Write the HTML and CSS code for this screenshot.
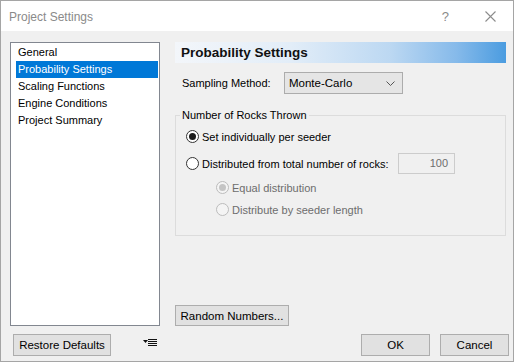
FILE: index.html
```html
<!DOCTYPE html>
<html>
<head>
<meta charset="utf-8">
<link rel="stylesheet" href="styles.css">
</head>
<body>
<div class="window">
  <div class="titlebar">
    <span class="title">Project Settings</span>
    <span class="help">?</span>
    <svg class="close" width="11" height="11" viewBox="0 0 11 11"><path d="M0.5 0.5 L10.5 10.5 M10.5 0.5 L0.5 10.5" stroke="#8c8c8c" stroke-width="1.1" fill="none"/></svg>
  </div>
  <div class="body">
    <div class="listbox">
      <div class="item">General</div>
      <div class="item selected">Probability Settings</div>
      <div class="item">Scaling Functions</div>
      <div class="item">Engine Conditions</div>
      <div class="item">Project Summary</div>
    </div>
    <div class="panel">
      <div class="header">Probability Settings</div>
      <div class="sampling">
        <span class="sampling-label">Sampling Method:</span>
        <div class="select">
          <span>Monte-Carlo</span>
          <svg width="9" height="5" viewBox="0 0 9 5"><polyline points="0.5,0.5 4.5,4.5 8.5,0.5" stroke="#555" stroke-width="1" fill="none"/></svg>
        </div>
      </div>
      <fieldset class="group">
        <legend>Number of Rocks Thrown</legend>
        <div class="row row1"><span class="radio checked"></span><span>Set individually per seeder</span></div>
        <div class="row row2"><span class="radio"></span><span class="wide">Distributed from total number of rocks:</span><span class="numbox">100</span></div>
        <div class="row sub row3"><span class="radio disabled checked"></span><span class="dim">Equal distribution</span></div>
        <div class="row sub row4"><span class="radio disabled"></span><span class="dim">Distribute by seeder length</span></div>
      </fieldset>
      <div class="btn random">Random Numbers...</div>
    </div>
    <div class="footer-left">
      <div class="btn restore">Restore Defaults</div>
      <svg class="menu-icon" width="14" height="8" viewBox="0 0 14 8">
        <polygon points="0,1 5,1 2.5,4" fill="#111"/>
        <rect x="5" y="0" width="9" height="1" fill="#111"/>
        <rect x="5" y="2" width="9" height="1" fill="#111"/>
        <rect x="5" y="4" width="9" height="1" fill="#111"/>
        <rect x="5" y="6" width="9" height="1" fill="#111"/>
      </svg>
    </div>
    <div class="footer-right">
      <div class="btn ok">OK</div>
      <div class="btn cancel">Cancel</div>
    </div>
  </div>
</div>
</body>
</html>
```
FILE: styles.css
```css
* { box-sizing: border-box; }
html, body { margin: 0; padding: 0; }
body {
  width: 514px;
  height: 362px;
  font-family: "Liberation Sans", Arial, sans-serif;
  font-size: 11px;
  color: #000;
  background: #fff;
}
.window {
  width: 514px;
  height: 362px;
  border: 1px solid #a5a5a5;
  display: flex;
  flex-direction: column;
}
.titlebar {
  height: 30px;
  background: #fff;
  display: flex;
  align-items: center;
  padding-left: 8px;
}
.title {
  font-size: 12px;
  color: #8a8a8a;
  flex: 1;
  margin-top: 1px;
}
.help {
  font-size: 13px;
  color: #8a8a8a;
  margin-right: 36px;
}
.close { margin-right: 17px; }
.body {
  flex: 1;
  background: #f0f0f0;
  display: grid;
  grid-template-columns: 150px 334px;
  grid-template-rows: 284px 22px;
  column-gap: 15px;
  row-gap: 8px;
  padding: 11px 0 0 9px;
}
.listbox {
  background: #fff;
  border: 1px solid #828790;
  padding: 1px 0 0 5px;
}
.item {
  height: 17px;
  line-height: 17px;
  width: 142px;
  padding-left: 2px;
  white-space: nowrap;
}
.item.selected {
  background: #0078d7;
  color: #fff;
}
.panel {
  display: flex;
  flex-direction: column;
  padding-right: 3px;
}
.header {
  height: 21px;
  line-height: 21px;
  padding-left: 6px;
  font-weight: bold;
  font-size: 13.5px;
  color: #111;
  background: linear-gradient(to right, #f3f6fa 0%, #e2edf8 35%, #bcd8f2 65%, #86baea 85%, #4b9ce0 100%);
}
.sampling {
  margin-top: 9px;
  height: 22px;
  display: flex;
  align-items: center;
  padding-left: 7px;
}
.sampling-label { width: 102px; }
.select {
  width: 119px;
  height: 22px;
  background: #e5e5e5;
  border: 1px solid #acacac;
  display: flex;
  align-items: center;
  justify-content: space-between;
  padding: 0 7px 0 4px;
  font-size: 11.5px;
}
.group {
  margin: 15px 0 0 0;
  height: 127px;
  border: 1px solid #dcdcdc;
  padding: 0 0 0 4px;
  min-width: 0;
}
.group legend {
  padding: 0 2px;
  height: 13px;
  line-height: 13px;
}
.row {
  display: flex;
  align-items: center;
  height: 17px;
  padding-left: 6px;
  white-space: nowrap;
}
.row1 { margin-top: 6px; }
.row2 { margin-top: 8px; height: 21px; }
.row3 { margin-top: 5px; }
.row4 { margin-top: 5px; }
.row.sub { padding-left: 36px; }
.radio {
  width: 13px;
  height: 13px;
  border-radius: 50%;
  border: 1px solid #333;
  background: #fff;
  margin-right: 3px;
  flex: none;
  display: flex;
  align-items: center;
  justify-content: center;
}
.radio.checked::after {
  content: "";
  width: 7px;
  height: 7px;
  border-radius: 50%;
  background: #1a1a1a;
}
.radio.disabled {
  border-color: #bcbcbc;
  background: #f4f4f4;
}
.radio.disabled.checked::after { background: #c4c4c4; }
.wide { width: 196px; }
.dim { color: #6d6d6d; }
.numbox {
  width: 57px;
  height: 21px;
  border: 1px solid #cccccc;
  background: #f0f0f0;
  color: #6d6d6d;
  text-align: right;
  line-height: 19px;
  padding-right: 6px;
}
.btn {
  background: #e1e1e1;
  border: 1px solid #adadad;
  display: flex;
  align-items: center;
  justify-content: center;
  height: 22px;
  font-size: 11.5px;
}
.random {
  margin-top: auto;
  width: 114px;
  height: 21px;
}
.footer-left {
  display: flex;
  align-items: center;
  padding-left: 3px;
}
.restore { width: 98px; }
.menu-icon { margin-left: 32px; margin-top: -4px; }
.footer-right {
  display: flex;
  justify-content: flex-end;
  gap: 10px;
}
.ok, .cancel { width: 69px; }
```
